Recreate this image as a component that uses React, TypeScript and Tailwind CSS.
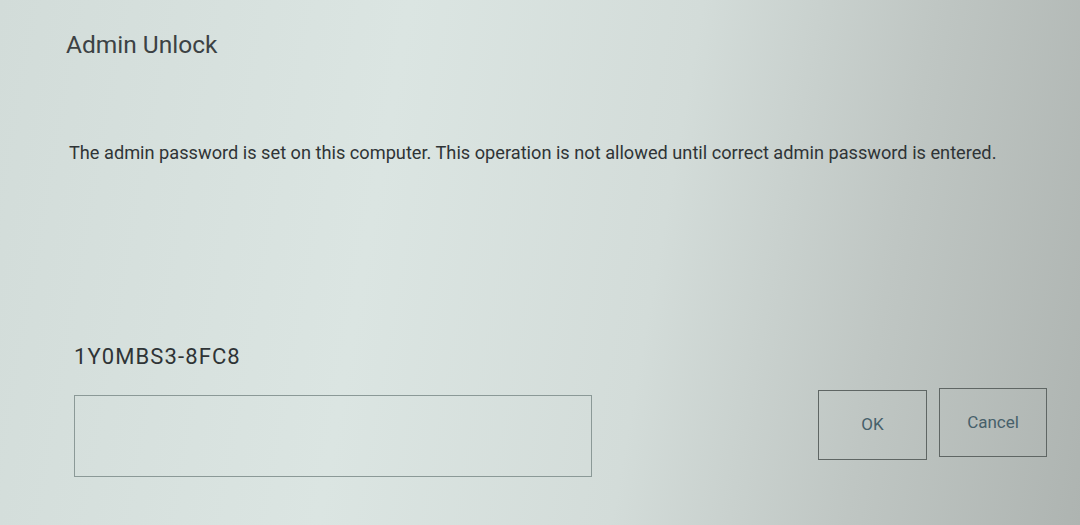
import React from "react";

export default function App() {
  return (
    <div
      className="w-[1080px] h-[525px] overflow-hidden bg-[linear-gradient(100deg,#d2dcd9_0%,#dbe5e2_35%,#d3dcd9_60%,#bfc6c3_80%,#aeb4b1_100%)] text-[#3a3f41]"
      style={{ fontFamily: "Roboto, 'Noto Sans', sans-serif" }}
    >
      <div className="flex flex-col pl-[66px] pt-[29px]">
        <h1 className="text-[24.5px] leading-[32px] text-[#3c4244] font-normal">Admin Unlock</h1>
        <p className="mt-[80px] pl-[3px] text-[18.2px] leading-[24px] text-[#2f3436]">
          The admin password is set on this computer. This operation is not allowed until correct admin password is entered.
        </p>
        <div className="mt-[179px] pl-[8px] text-[22px] leading-[26px] tracking-[1.1px] text-[#2f3436]">1Y0MBS3-8FC8</div>
        <div className="flex items-start mt-[25px] pl-[8px]">
          <div className="w-[518px] h-[82px] border border-[#8b9997]" />
          <div className="ml-[226px] -mt-[5px] flex gap-[12px]">
            <button className="w-[109px] h-[70px] border border-[#5f6664] text-[17px] text-[#47606a]">OK</button>
            <button className="w-[108px] h-[69px] -mt-[2px] border border-[#5f6664] text-[17px] text-[#47606a]">Cancel</button>
          </div>
        </div>
      </div>
    </div>
  );
}
